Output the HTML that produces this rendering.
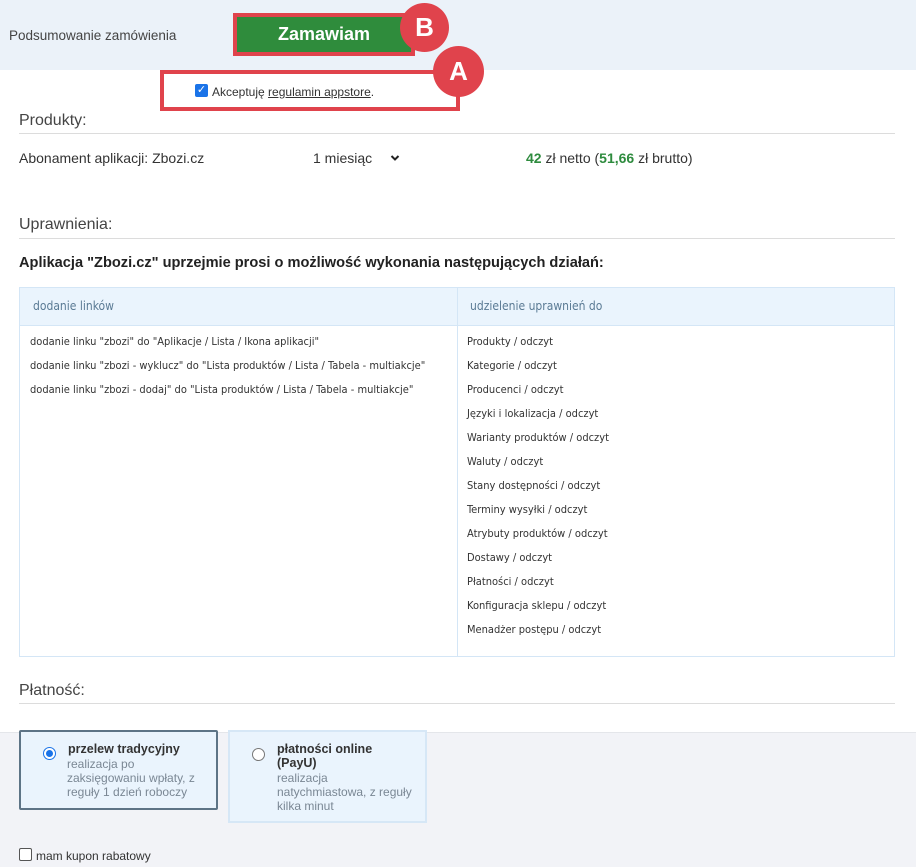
<!DOCTYPE html>
<html><head><meta charset="utf-8"><style>
*{box-sizing:border-box;margin:0;padding:0}
body{width:916px;height:867px;overflow:hidden;background:#fff;font-family:"Liberation Sans","DejaVu Sans",sans-serif;color:#333;position:relative}
.a{position:absolute;white-space:nowrap}
.hdr{position:absolute;left:0;top:0;width:916px;height:70px;background:#ebf2f9}
.line{position:absolute;left:19px;width:876px;height:1px;background:#dcdcdc}
.circ{position:absolute;border-radius:50%;background:#e0434c;color:#fff;font-weight:bold;font-size:26px;text-align:center}
.tbl{position:absolute;left:19px;top:287px;width:876px;height:370px;border:1px solid #d4e6f6}
.th{position:absolute;top:0;height:38px;left:0;width:874px;background:#eaf4fd;border-bottom:1px solid #d4e6f6}
.vs{position:absolute;left:437px;top:0;bottom:0;width:1px;background:#d4e6f6}
.c{position:absolute;font-size:11px;color:#333;font-family:"DejaVu Sans Condensed","Liberation Sans Narrow","Liberation Sans",sans-serif;white-space:nowrap}
</style></head><body>
<div class="hdr"></div>
<div class="a" style="left:9px;top:28px;font-size:13.5px;color:#444">Podsumowanie zamówienia</div>
<div class="a" style="left:233px;top:13px;width:182px;height:43px;border:4px solid #e0434c;background:#2f8c3c;color:#fff;font-weight:bold;font-size:18px;text-align:center;line-height:35px">Zamawiam</div>
<div class="circ" style="left:400px;top:3px;width:49px;height:49px;line-height:49px">B</div>
<div class="a" style="left:160px;top:70px;width:300px;height:41px;border:4px solid #e0434c"></div>
<div class="circ" style="left:433px;top:46px;width:51px;height:51px;line-height:51px">A</div>
<div class="a" style="left:195px;top:84px;width:13px;height:13px;border-radius:2px;background:#1a73e8;color:#fff;font-size:11px;line-height:13px;text-align:center;font-weight:bold">✓</div>
<div class="a" style="left:212px;top:85px;font-size:12px;color:#333">Akceptuję <span style="text-decoration:underline">regulamin appstore</span>.</div>
<div class="a" style="left:19px;top:112px;font-size:16px;color:#444">Produkty:</div>
<div class="line" style="top:133px"></div>
<div class="a" style="left:19px;top:150px;font-size:14px">Abonament aplikacji: Zbozi.cz</div>
<div class="a" style="left:313px;top:150px;font-size:14px">1 miesiąc</div>
<svg class="a" style="left:390px;top:154px" width="10" height="8"><path d="M1.5 2l3.5 3.5L8.5 2" stroke="#222" stroke-width="2" fill="none"/></svg>
<div class="a" style="left:526px;top:150px;font-size:14px"><b style="color:#2e8b3e">42</b> zł netto (<b style="color:#2e8b3e">51,66</b> zł brutto)</div>
<div class="a" style="left:19px;top:216px;font-size:16px;color:#444">Uprawnienia:</div>
<div class="line" style="top:238px"></div>
<div class="a" style="left:19px;top:255px;font-size:14.6px;font-weight:bold;color:#222">Aplikacja "Zbozi.cz" uprzejmie prosi o możliwość wykonania następujących działań:</div>
<div class="tbl">
<div class="th"></div><div class="vs"></div>
<div class="c" style="left:13px;top:11px;font-size:12px;color:#5a7a94">dodanie linków</div>
<div class="c" style="left:450px;top:11px;font-size:12px;color:#5a7a94">udzielenie uprawnień do</div>
<div class="c" style="left:10px;top:47px">dodanie linku "zbozi" do "Aplikacje / Lista / Ikona aplikacji"</div>
<div class="c" style="left:10px;top:71px">dodanie linku "zbozi - wyklucz" do "Lista produktów / Lista / Tabela - multiakcje"</div>
<div class="c" style="left:10px;top:95px">dodanie linku "zbozi - dodaj" do "Lista produktów / Lista / Tabela - multiakcje"</div>
<div class="c" style="left:447px;top:47px">Produkty / odczyt</div>
<div class="c" style="left:447px;top:71px">Kategorie / odczyt</div>
<div class="c" style="left:447px;top:95px">Producenci / odczyt</div>
<div class="c" style="left:447px;top:119px">Języki i lokalizacja / odczyt</div>
<div class="c" style="left:447px;top:143px">Warianty produktów / odczyt</div>
<div class="c" style="left:447px;top:167px">Waluty / odczyt</div>
<div class="c" style="left:447px;top:191px">Stany dostępności / odczyt</div>
<div class="c" style="left:447px;top:215px">Terminy wysyłki / odczyt</div>
<div class="c" style="left:447px;top:239px">Atrybuty produktów / odczyt</div>
<div class="c" style="left:447px;top:263px">Dostawy / odczyt</div>
<div class="c" style="left:447px;top:287px">Płatności / odczyt</div>
<div class="c" style="left:447px;top:311px">Konfiguracja sklepu / odczyt</div>
<div class="c" style="left:447px;top:335px">Menadżer postępu / odczyt</div>
</div>
<div class="a" style="left:19px;top:682px;font-size:16px;color:#444">Płatność:</div>
<div class="line" style="top:703px"></div>
<div class="a" style="left:0;top:732px;width:916px;height:135px;background:#f2f3f7;border-top:1px solid #e4e6ea"></div>
<div class="a" style="left:19px;top:730px;width:199px;height:80px;border:2px solid #5d7486;background:#eaf4fd;border-radius:2px"></div>
<div class="a" style="left:43px;top:747px;width:13px;height:13px;border-radius:50%;border:1px solid #1a73e8;background:#fff"><div style="margin:2px;width:7px;height:7px;border-radius:50%;background:#1a73e8"></div></div>
<div class="a" style="left:68px;top:742px;font-size:12.5px;font-weight:bold;color:#333">przelew tradycyjny</div>
<div class="a" style="left:67px;top:757px;font-size:12px;color:#7a8794;line-height:14px">realizacja po<br>zaksięgowaniu wpłaty, z<br>reguły 1 dzień roboczy</div>
<div class="a" style="left:228px;top:730px;width:199px;height:93px;border:2px solid #d6e7f6;background:#eaf4fd"></div>
<div class="a" style="left:252px;top:748px;width:13px;height:13px;border-radius:50%;border:1px solid #777;background:#fff"></div>
<div class="a" style="left:277px;top:742px;font-size:12.5px;font-weight:bold;color:#333;line-height:14px">płatności online<br>(PayU)</div>
<div class="a" style="left:277px;top:771px;font-size:12px;color:#7a8794;line-height:14px">realizacja<br>natychmiastowa, z reguły<br>kilka minut</div>
<div class="a" style="left:19px;top:848px;width:13px;height:13px;border:1px solid #555;border-radius:2px;background:#fff"></div>
<div class="a" style="left:36px;top:849px;font-size:12px;color:#333">mam kupon rabatowy</div>
</body></html>
